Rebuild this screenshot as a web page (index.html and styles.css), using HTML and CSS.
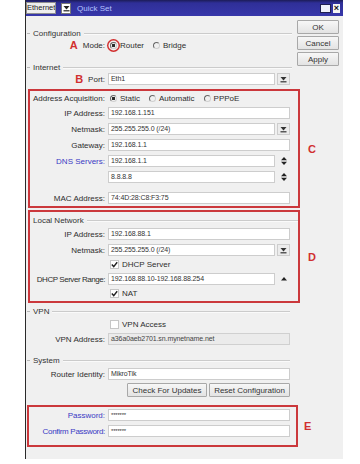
FILE: index.html
```html
<!DOCTYPE html>
<html lang="en">
<head>
  <meta charset="UTF-8" />
  <meta name="viewport" content="width=device-width, initial-scale=1.0"/>
  <title>Quick Set</title>
  <link rel="stylesheet" href="styles.css">
</head>
<body>
  <div class="window">
    <div class="titlebar">
      <span class="tab">Ethernet</span>
      <span class="tab-drop">
        <svg width="7" height="7" viewBox="0 0 7 7"><path d="M0.5 1h6L3.5 4.5z" fill="#222"/><rect x="0.5" y="5.2" width="6" height="1.2" fill="#222"/></svg>
      </span>
      <span class="title">Quick Set</span>
      <span class="win-icons">
        <span class="restore"></span>
        <span class="close">×</span>
      </span>
    </div>

    <div class="top">
      <div class="section">
        <div class="group-head"><span>Configuration</span></div>
        <div class="row tall">
          <label><b class="mark">A</b>Mode:</label>
          <div class="choices">
            <span class="choice"><i class="radio on ring"></i>Router</span>
            <span class="choice"><i class="radio"></i>Bridge</span>
          </div>
        </div>
        <div class="group-head gap-top"><span>Internet</span></div>
        <div class="row tall">
          <label><b class="mark b">B</b>Port:</label>
          <div class="combo">
            <span class="input">Eth1</span>
            <span class="drop"><svg width="7" height="7" viewBox="0 0 7 7"><path d="M0.5 1h6L3.5 4.5z" fill="#333"/><rect x="0.5" y="5.2" width="6" height="1.2" fill="#333"/></svg></span>
          </div>
        </div>
      </div>
      <div class="actions">
        <button>OK</button>
        <button>Cancel</button>
        <button>Apply</button>
      </div>
    </div>

    <!-- C: address settings -->
    <div class="marked c">
      <div class="box">
        <div class="row acq">
          <label>Address Acquisition:</label>
          <div class="choices">
            <span class="choice"><i class="radio on"></i>Static</span>
            <span class="choice"><i class="radio"></i>Automatic</span>
            <span class="choice"><i class="radio"></i>PPPoE</span>
          </div>
        </div>
        <div class="row">
          <label>IP Address:</label>
          <span class="input">192.168.1.151</span>
        </div>
        <div class="row">
          <label>Netmask:</label>
          <div class="combo">
            <span class="input">255.255.255.0 (/24)</span>
            <span class="drop"><svg width="7" height="7" viewBox="0 0 7 7"><path d="M0.5 1h6L3.5 4.5z" fill="#333"/><rect x="0.5" y="5.2" width="6" height="1.2" fill="#333"/></svg></span>
          </div>
        </div>
        <div class="row">
          <label>Gateway:</label>
          <span class="input">192.168.1.1</span>
        </div>
        <div class="row">
          <label class="blue">DNS Servers:</label>
          <div class="combo">
            <span class="input">192.168.1.1</span>
            <span class="spin"><svg width="6" height="8" viewBox="0 0 6 8"><path d="M3 0L6 3.3H0z M3 8L6 4.7H0z" fill="#222"/></svg></span>
          </div>
        </div>
        <div class="row">
          <label></label>
          <div class="combo">
            <span class="input">8.8.8.8</span>
            <span class="spin"><svg width="6" height="8" viewBox="0 0 6 8"><path d="M3 0L6 3.3H0z M3 8L6 4.7H0z" fill="#222"/></svg></span>
          </div>
        </div>
        <div class="row mac">
          <label>MAC Address:</label>
          <span class="input">74:4D:28:C8:F3:75</span>
        </div>
      </div>
      <b class="mark">C</b>
    </div>

    <!-- D: local network -->
    <div class="marked d">
      <div class="box">
        <div class="group-head"><span>Local Network</span></div>
        <div class="row first">
          <label>IP Address:</label>
          <span class="input">192.168.88.1</span>
        </div>
        <div class="row">
          <label>Netmask:</label>
          <div class="combo">
            <span class="input">255.255.255.0 (/24)</span>
            <span class="drop"><svg width="7" height="7" viewBox="0 0 7 7"><path d="M0.5 1h6L3.5 4.5z" fill="#333"/><rect x="0.5" y="5.2" width="6" height="1.2" fill="#333"/></svg></span>
          </div>
        </div>
        <div class="row short">
          <label></label>
          <span class="choice"><i class="check"><svg width="7" height="7" viewBox="0 0 7 7"><path d="M0.8 3.6L2.7 5.6L6.2 1.2" fill="none" stroke="#222" stroke-width="1.4"/></svg></i>DHCP Server</span>
        </div>
        <div class="row first">
          <label class="tight">DHCP Server Range:</label>
          <div class="combo range">
            <span class="input">192.168.88.10-192.168.88.254</span>
            <span class="spin"><svg width="6" height="4" viewBox="0 0 6 4"><path d="M3 0L6 3.5H0z" fill="#222"/></svg></span>
          </div>
        </div>
        <div class="row short">
          <label></label>
          <span class="choice"><i class="check"><svg width="7" height="7" viewBox="0 0 7 7"><path d="M0.8 3.6L2.7 5.6L6.2 1.2" fill="none" stroke="#222" stroke-width="1.4"/></svg></i>NAT</span>
        </div>
      </div>
      <b class="mark">D</b>
    </div>

    <div class="section lower">
      <div class="group-head"><span>VPN</span></div>
      <div class="row short vpn">
        <label></label>
        <span class="choice"><i class="check"></i>VPN Access</span>
      </div>
      <div class="row first">
        <label>VPN Address:</label>
        <span class="input disabled">a36a0aeb2701.sn.mynetname.net</span>
      </div>
      <div class="group-head system"><span>System</span></div>
      <div class="row first">
        <label>Router Identity:</label>
        <span class="input">MikroTik</span>
      </div>
      <div class="row btn-row">
        <label></label>
        <div class="btns">
          <button class="updates">Check For Updates</button>
          <button class="reset">Reset Configuration</button>
        </div>
      </div>
    </div>

    <!-- E: password -->
    <div class="marked e">
      <div class="box">
        <div class="row">
          <label class="blue">Password:</label>
          <span class="input pass">*******</span>
        </div>
        <div class="row">
          <label class="blue tight-sm">Confirm Password:</label>
          <span class="input pass">*******</span>
        </div>
      </div>
      <b class="mark">E</b>
    </div>
  </div>
</body>
</html>
```

FILE: styles.css
```css
* {
  margin: 0;
  padding: 0;
  box-sizing: border-box;
}

body {
  font-family: "Liberation Sans", Arial, sans-serif;
  font-size: 8px;
  color: #2e2e2e;
  background: #fff;
}

.window {
  margin-left: 25px;
  width: 318px;
  height: 459px;
  background: #f0f0f0;
  border-left: 1px solid #2a2a2a;
}

/* title bar */
.titlebar {
  height: 16px;
  display: flex;
  align-items: center;
  background: linear-gradient(#1c1c58 0, #2f2f98 3px, #3737aa);
}

.tab {
  width: 30px;
  height: 12px;
  background: #eeeeee;
  border: 1px solid #8f8f8f;
  color: #222;
  font-size: 7.5px;
  line-height: 10px;
  white-space: nowrap;
  overflow: hidden;
}

.tab-drop {
  margin-left: 5px;
  width: 10px;
  height: 11px;
  background: #fff;
  border: 1px solid #777;
  display: flex;
  align-items: center;
  justify-content: center;
}

.title {
  margin-left: 6px;
  color: #b4c2ff;
}

.win-icons {
  margin-left: auto;
  margin-right: 3px;
  display: flex;
  align-items: center;
  gap: 2px;
}

.restore {
  width: 11px;
  height: 9px;
  background: #eef0fa;
  border: 1px solid #1e1e50;
}

.close {
  width: 7px;
  height: 9px;
  background: #f4f4f4;
  color: #111;
  font-size: 9px;
  font-weight: bold;
  line-height: 9px;
  text-align: center;
}

/* top area with action buttons */
.top {
  display: grid;
  grid-template-columns: 266px 42px;
  column-gap: 5px;
}

.section {
  padding-left: 4px;
  padding-top: 12px;
}

.section.lower {
  width: 264px;
  padding-top: 3px;
}

.actions {
  padding-top: 4px;
  display: flex;
  flex-direction: column;
  gap: 2px;
}

button {
  height: 14px;
  font-family: inherit;
  font-size: 8px;
  color: #333;
  background: linear-gradient(#f7f7f7, #e3e3e3);
  border: 1px solid #a8a8a8;
  border-radius: 1px;
}

/* group headers */
.group-head {
  display: flex;
  align-items: center;
  gap: 3px;
  height: 10px;
  margin-left: -3px;
  color: #333;
}

.group-head::before {
  content: "";
  width: 3px;
  height: 1px;
  background: #b8b8b8;
}

.group-head::after {
  content: "";
  flex: 1;
  height: 1px;
  background: #cbcbcb;
  box-shadow: 0 1px 0 #fafafa;
}

.group-head.gap-top {
  margin-top: 10px;
}

.group-head.system {
  margin-top: 8px;
}

.box .group-head {
  margin-left: 0;
  padding-left: 3px;
  margin-top: 3px;
}

.box .group-head::before {
  display: none;
}

/* form rows */
.row {
  display: grid;
  grid-template-columns: 75px 182px;
  column-gap: 3px;
  align-items: center;
  height: 16px;
}

.row > label {
  text-align: right;
  white-space: nowrap;
}

.row.tall {
  height: 14px;
}

.row.short {
  height: 12px;
}

.row.first {
  margin-top: 1px;
}

.row.acq {
  height: 14px;
}

.row.mac {
  margin-top: 5px;
}

.row.vpn {
  margin-top: 2px;
}

.row.btn-row {
  height: 14px;
  margin-top: 1px;
}

.row .blue {
  color: #3a3ac4;
}

.row .tight {
  letter-spacing: -0.45px;
}

.row .tight-sm {
  letter-spacing: -0.3px;
}

.tall > label {
  display: flex;
  justify-content: flex-end;
  align-items: center;
  gap: 5px;
}

.mark {
  font-size: 11px;
  font-weight: bold;
  color: #d12f2f;
}

.input {
  display: block;
  height: 12px;
  background: #fff;
  border: 1px solid #cdcdcd;
  padding-left: 2px;
  font-size: 7px;
  line-height: 10px;
  letter-spacing: -0.1px;
  color: #333;
  white-space: nowrap;
  overflow: hidden;
}

.input.disabled {
  background: #ebebeb;
  border-color: #d0d0d0;
  color: #444;
}

.input.pass {
  font-size: 6px;
  letter-spacing: -0.2px;
}

.combo {
  display: flex;
  align-items: center;
  gap: 2px;
}

.combo .input {
  width: 167px;
}

.combo.range .input {
  width: 169px;
}

.drop {
  width: 13px;
  height: 12px;
  background: #ececec;
  border: 1px solid #cdcdcd;
  display: flex;
  align-items: center;
  justify-content: center;
}

.spin {
  width: 13px;
  display: flex;
  justify-content: center;
}

/* radios and checkboxes */
.choices {
  display: flex;
  align-items: center;
  gap: 9px;
  padding-left: 2px;
}

.choice {
  display: flex;
  align-items: center;
  gap: 3px;
}

.radio {
  width: 7px;
  height: 7px;
  border-radius: 50%;
  border: 1px solid;
  border-color: #666 #d0d0d0 #d0d0d0 #666;
}

.radio.on {
  background: radial-gradient(circle, #2a2a2a 0 1.4px, transparent 1.9px);
}

.radio.ring {
  box-shadow: 0 0 0 1.5px #f0f0f0, 0 0 0 3px #d12f2f;
}

.check {
  width: 9px;
  height: 9px;
  margin-left: 2px;
  background: #fff;
  border: 1px solid #c6c6c6;
  display: flex;
  align-items: center;
  justify-content: center;
}

.btns {
  display: flex;
  justify-content: flex-end;
  gap: 2px;
}

.btns .updates {
  width: 80px;
}

.btns .reset {
  width: 81px;
}

/* annotated boxes */
.marked {
  display: flex;
  align-items: center;
  gap: 8px;
  margin-left: 2px;
}

.box {
  width: 272px;
  border: 2px solid #cb383c;
}

.marked.c {
  margin-top: 3px;
}

.marked.d {
  margin-top: 2px;
}

.marked.d .box {
  padding-bottom: 2px;
}

.marked.e {
  margin-top: 8px;
  margin-left: 1px;
  gap: 6px;
}

.marked.e .box {
  width: 271px;
  padding-left: 1px;
  padding-bottom: 6px;
}
```
